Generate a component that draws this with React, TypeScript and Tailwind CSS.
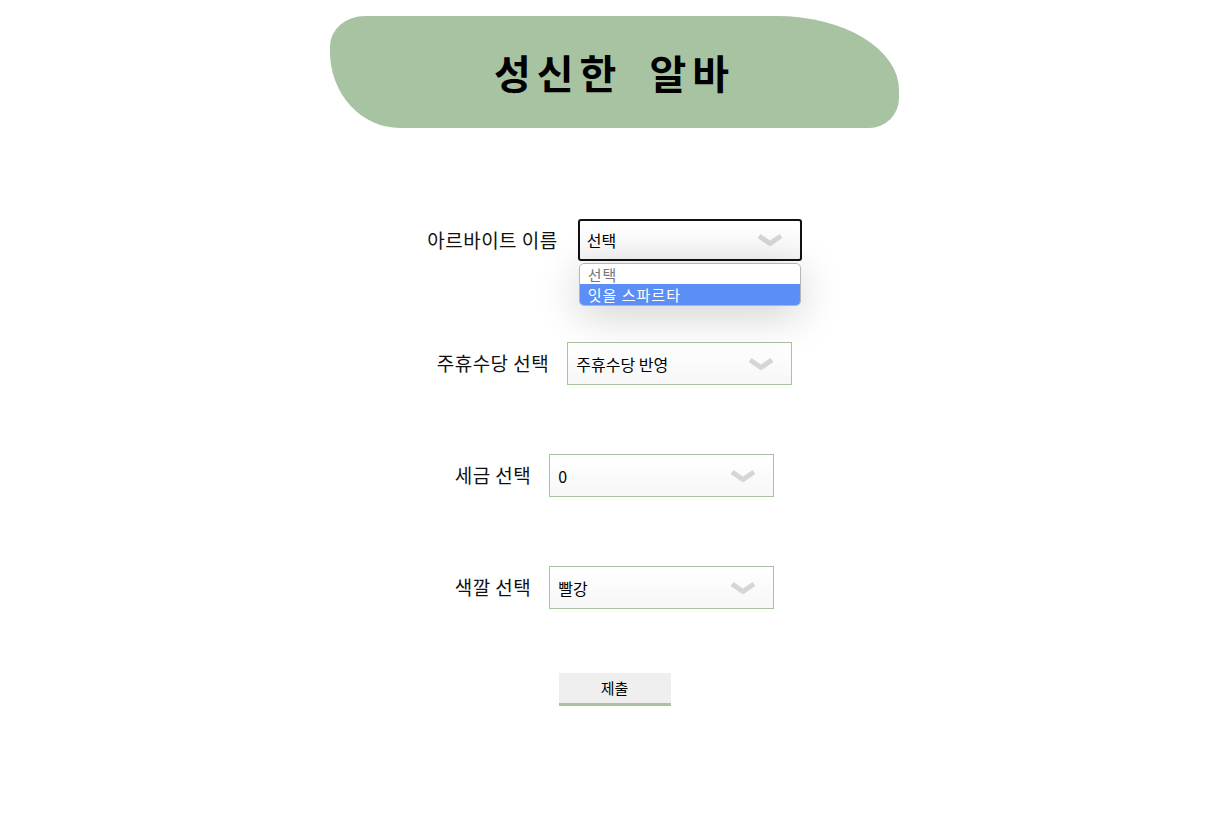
import React from "react";

const font = { fontFamily: '"Noto Sans CJK KR", "Noto Sans", sans-serif' };

function Chevron() {
  return (
    <svg width="28" height="16" viewBox="0 0 28 16" className="absolute right-[16px] top-1/2 -translate-y-1/2">
      <polyline points="3,4 14,11.5 25,4" fill="none" stroke="#d6d6d6" strokeWidth="5" strokeLinejoin="round" />
    </svg>
  );
}

function SelectBox({ value, open = false, options = [] as string[], active = 1 }: { value: string; open?: boolean; options?: string[]; active?: number }) {
  return (
    <div className="relative">
      <div
        className={
          open
            ? "relative w-[224px] h-[42px] border-2 border-[#111] rounded-[3px] bg-gradient-to-b from-white to-[#f7f7f7] flex items-center pl-[7px] text-[16px] text-black"
            : "relative w-[225px] h-[43px] border border-[#a8c3a1] bg-gradient-to-b from-white to-[#f7f7f7] flex items-center pl-2 text-[16px] text-black"
        }
      >
        {value}
        <Chevron />
      </div>
      {open && (
        <ul className="absolute left-[1px] right-[1px] top-full mt-[2px] bg-white border border-[#b5b5b5] rounded-[5px] overflow-hidden shadow-[0_8px_44px_rgba(0,0,0,0.2)] z-10">
          {options.map((o, i) => (
            <li
              key={o}
              className={
                i === active
                  ? "px-2 h-[21px] flex items-center text-[15px] leading-none tracking-[1px] bg-[#5b8ff6] text-white"
                  : "px-2 h-[20px] flex items-center text-[15px] leading-none tracking-[1px] text-[#777]"
              }
            >
              {o}
            </li>
          ))}
        </ul>
      )}
    </div>
  );
}

function Row({ label, gap, children, className = "" }: { label: string; gap: string; children: React.ReactNode; className?: string }) {
  return (
    <div className={`flex items-center justify-center ${gap} ${className}`}>
      <span className="text-[19px] tracking-[0.5px] text-[#111]">{label}</span>
      {children}
    </div>
  );
}

export default function App() {
  return (
    <div className="min-h-screen bg-white pl-5 pb-24" style={font}>
      <header className="mx-auto mt-4 w-[569px] h-[112px] bg-[#a8c3a1] flex items-center justify-center rounded-[35px_122px_30px_70px/30px_74px_30px_76px]">
        <h1 className="text-[40px] font-bold tracking-[6px] text-black [word-spacing:12px]">
          성신한 알바
        </h1>
      </header>

      <form className="flex flex-col items-center mt-[91px]">
        <Row label="아르바이트 이름" gap="gap-5">
          <SelectBox value="선택" open options={["선택", "잇올 스파르타"]} />
        </Row>
        <Row label="주휴수당 선택" gap="gap-[18px]" className="mt-[81px]">
          <SelectBox value="주휴수당 반영" />
        </Row>
        <Row label="세금 선택" gap="gap-[18px]" className="mt-[69px]">
          <SelectBox value="0" />
        </Row>
        <Row label="색깔 선택" gap="gap-[18px]" className="mt-[69px]">
          <SelectBox value="빨강" />
        </Row>
        <button
          type="button"
          className="mt-[64px] w-[112px] h-[33px] bg-[#efefef] border-b-[3px] border-[#a8c3a1] text-[15px] text-black"
        >
          제출
        </button>
      </form>
    </div>
  );
}
